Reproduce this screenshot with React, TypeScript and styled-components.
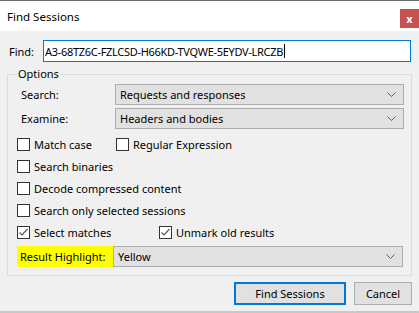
import styled, { createGlobalStyle } from "styled-components";

const GlobalStyle = createGlobalStyle`
    html, body {
        margin: 0;
        padding: 0;
        background: #f0f0f0;
    }
    body {
        font-family: "Noto Sans", "Open Sans", sans-serif;
        font-size: 11px;
        color: #000;
    }
`;

const Window = styled.div`
    width: 419px;
    height: 313px;
    box-sizing: border-box;
    display: flex;
    flex-direction: column;
    background: #f0f0f0;
    border-top: 1px solid #6b6b6b;
    border-bottom: 2px solid #c8c8c8;
`;

const TitleBar = styled.div`
    height: 30px;
    flex: none;
    display: flex;
    align-items: center;
    justify-content: space-between;
    background: #fff;
    padding-left: 7px;
    font-size: 11.5px;
`;

const CloseButton = styled.div`
    width: 19px;
    height: 19px;
    align-self: flex-start;
    margin-top: 8px;
    background: #c75050;
    color: #fff;
    font-weight: bold;
    font-size: 11px;
    display: flex;
    align-items: center;
    justify-content: center;
    line-height: 1;
`;

const Body = styled.div`
    flex: 1;
    display: flex;
    flex-direction: column;
    padding: 9px 7px 0 7px;
`;

const FindRow = styled.div`
    display: flex;
    align-items: center;
    height: 22px;
`;

const FindLabel = styled.label`
    width: 34px;
    padding-left: 2px;
`;

const FindInput = styled.div`
    flex: 1;
    height: 22px;
    box-sizing: border-box;
    margin-right: 1px;
    border: 1px solid #0078d7;
    background: #fff;
    display: flex;
    align-items: center;
    padding-left: 1px;
    letter-spacing: -0.3px;
    white-space: nowrap;
`;

const Caret = styled.span`
    display: inline-block;
    width: 1px;
    height: 14px;
    background: #000;
    margin-left: 1px;
`;

const GroupBox = styled.fieldset`
    margin: 4px 0 0 0;
    padding: 2px 7px 8px 9px;
    border: 1px solid #dcdcdc;
    display: flex;
    flex-direction: column;
`;

const Legend = styled.legend`
    padding: 0 2px 0 1px;
    line-height: 16px;
`;

const FieldRow = styled.div<{ $gap?: number }>`
    display: grid;
    grid-template-columns: 98px 1fr;
    align-items: center;
    margin-top: ${(p) => p.$gap ?? 0}px;
`;

const FieldLabel = styled.span`
    padding-left: 4px;
`;

const Select = styled.div`
    height: 21px;
    box-sizing: border-box;
    border: 1px solid #adadad;
    background: #e1e1e1;
    display: flex;
    align-items: center;
    justify-content: space-between;
    padding: 0 7px 0 4px;
`;

const Chevron = () => (
    <svg width="9" height="5" viewBox="0 0 9 5">
        <path d="M0.5 0.5 L4.5 4.5 L8.5 0.5" fill="none" stroke="#606060" strokeWidth="1" />
    </svg>
);

const CheckGrid = styled.div`
    margin-top: 4px;
    display: flex;
    flex-direction: column;
`;

const CheckLine = styled.div`
    display: flex;
    height: 22px;
    align-items: center;
`;

const CheckItem = styled.label<{ $width?: number }>`
    display: flex;
    align-items: center;
    gap: 4px;
    white-space: nowrap;
    width: ${(p) => (p.$width ? `${p.$width}px` : "auto")};
`;

const Box = styled.span`
    width: 13px;
    height: 13px;
    box-sizing: border-box;
    border: 1px solid #333;
    background: #fff;
    display: flex;
    align-items: center;
    justify-content: center;
    flex: none;
`;

const Check = ({ checked, label, width }: { checked?: boolean; label: string; width?: number }) => (
    <CheckItem $width={width}>
        <Box>
            {checked && (
                <svg width="11" height="11" viewBox="0 0 11 11">
                    <path d="M1.5 5.5 L4 8 L9.5 2" fill="none" stroke="#555" strokeWidth="1.2" />
                </svg>
            )}
        </Box>
        <span>{label}</span>
    </CheckItem>
);

const HighlightRow = styled.div`
    display: grid;
    grid-template-columns: 96px 1fr;
    margin-top: 3px;
    margin-right: 1px;
`;

const HighlightLabel = styled.span`
    background: #ffff00;
    display: flex;
    align-items: center;
    padding-left: 3px;
    height: 21px;
    white-space: nowrap;
`;

const ButtonRow = styled.div`
    display: flex;
    justify-content: flex-end;
    gap: 8px;
    margin-top: 6px;
`;

const Button = styled.button<{ $primary?: boolean }>`
    font: inherit;
    color: #000;
    height: 23px;
    box-sizing: border-box;
    width: ${(p) => (p.$primary ? "112px" : "58px")};
    background: #e1e1e1;
    border: ${(p) => (p.$primary ? "2px solid #0078d7" : "1px solid #adadad")};
    padding: 0;
`;

export default function App() {
    return (
        <>
            <GlobalStyle />
            <Window>
                <TitleBar>
                    <span>Find Sessions</span>
                    <CloseButton>x</CloseButton>
                </TitleBar>
                <Body>
                    <FindRow>
                        <FindLabel>Find:</FindLabel>
                        <FindInput>
                            A3-68TZ6C-FZLCSD-H66KD-TVQWE-5EYDV-LRCZB
                            <Caret />
                        </FindInput>
                    </FindRow>
                    <GroupBox>
                        <Legend>Options</Legend>
                        <FieldRow>
                            <FieldLabel>Search:</FieldLabel>
                            <Select>
                                <span>Requests and responses</span>
                                <Chevron />
                            </Select>
                        </FieldRow>
                        <FieldRow $gap={3}>
                            <FieldLabel>Examine:</FieldLabel>
                            <Select>
                                <span>Headers and bodies</span>
                                <Chevron />
                            </Select>
                        </FieldRow>
                        <CheckGrid>
                            <CheckLine>
                                <Check label="Match case" width={99} />
                                <Check label="Regular Expression" />
                            </CheckLine>
                            <CheckLine>
                                <Check label="Search binaries" />
                            </CheckLine>
                            <CheckLine>
                                <Check label="Decode compressed content" />
                            </CheckLine>
                            <CheckLine>
                                <Check label="Search only selected sessions" />
                            </CheckLine>
                            <CheckLine>
                                <Check checked label="Select matches" width={142} />
                                <Check checked label="Unmark old results" />
                            </CheckLine>
                        </CheckGrid>
                        <HighlightRow>
                            <HighlightLabel>Result Highlight:</HighlightLabel>
                            <Select>
                                <span>Yellow</span>
                                <Chevron />
                            </Select>
                        </HighlightRow>
                    </GroupBox>
                    <ButtonRow>
                        <Button $primary>Find Sessions</Button>
                        <Button>Cancel</Button>
                    </ButtonRow>
                </Body>
            </Window>
        </>
    );
}
